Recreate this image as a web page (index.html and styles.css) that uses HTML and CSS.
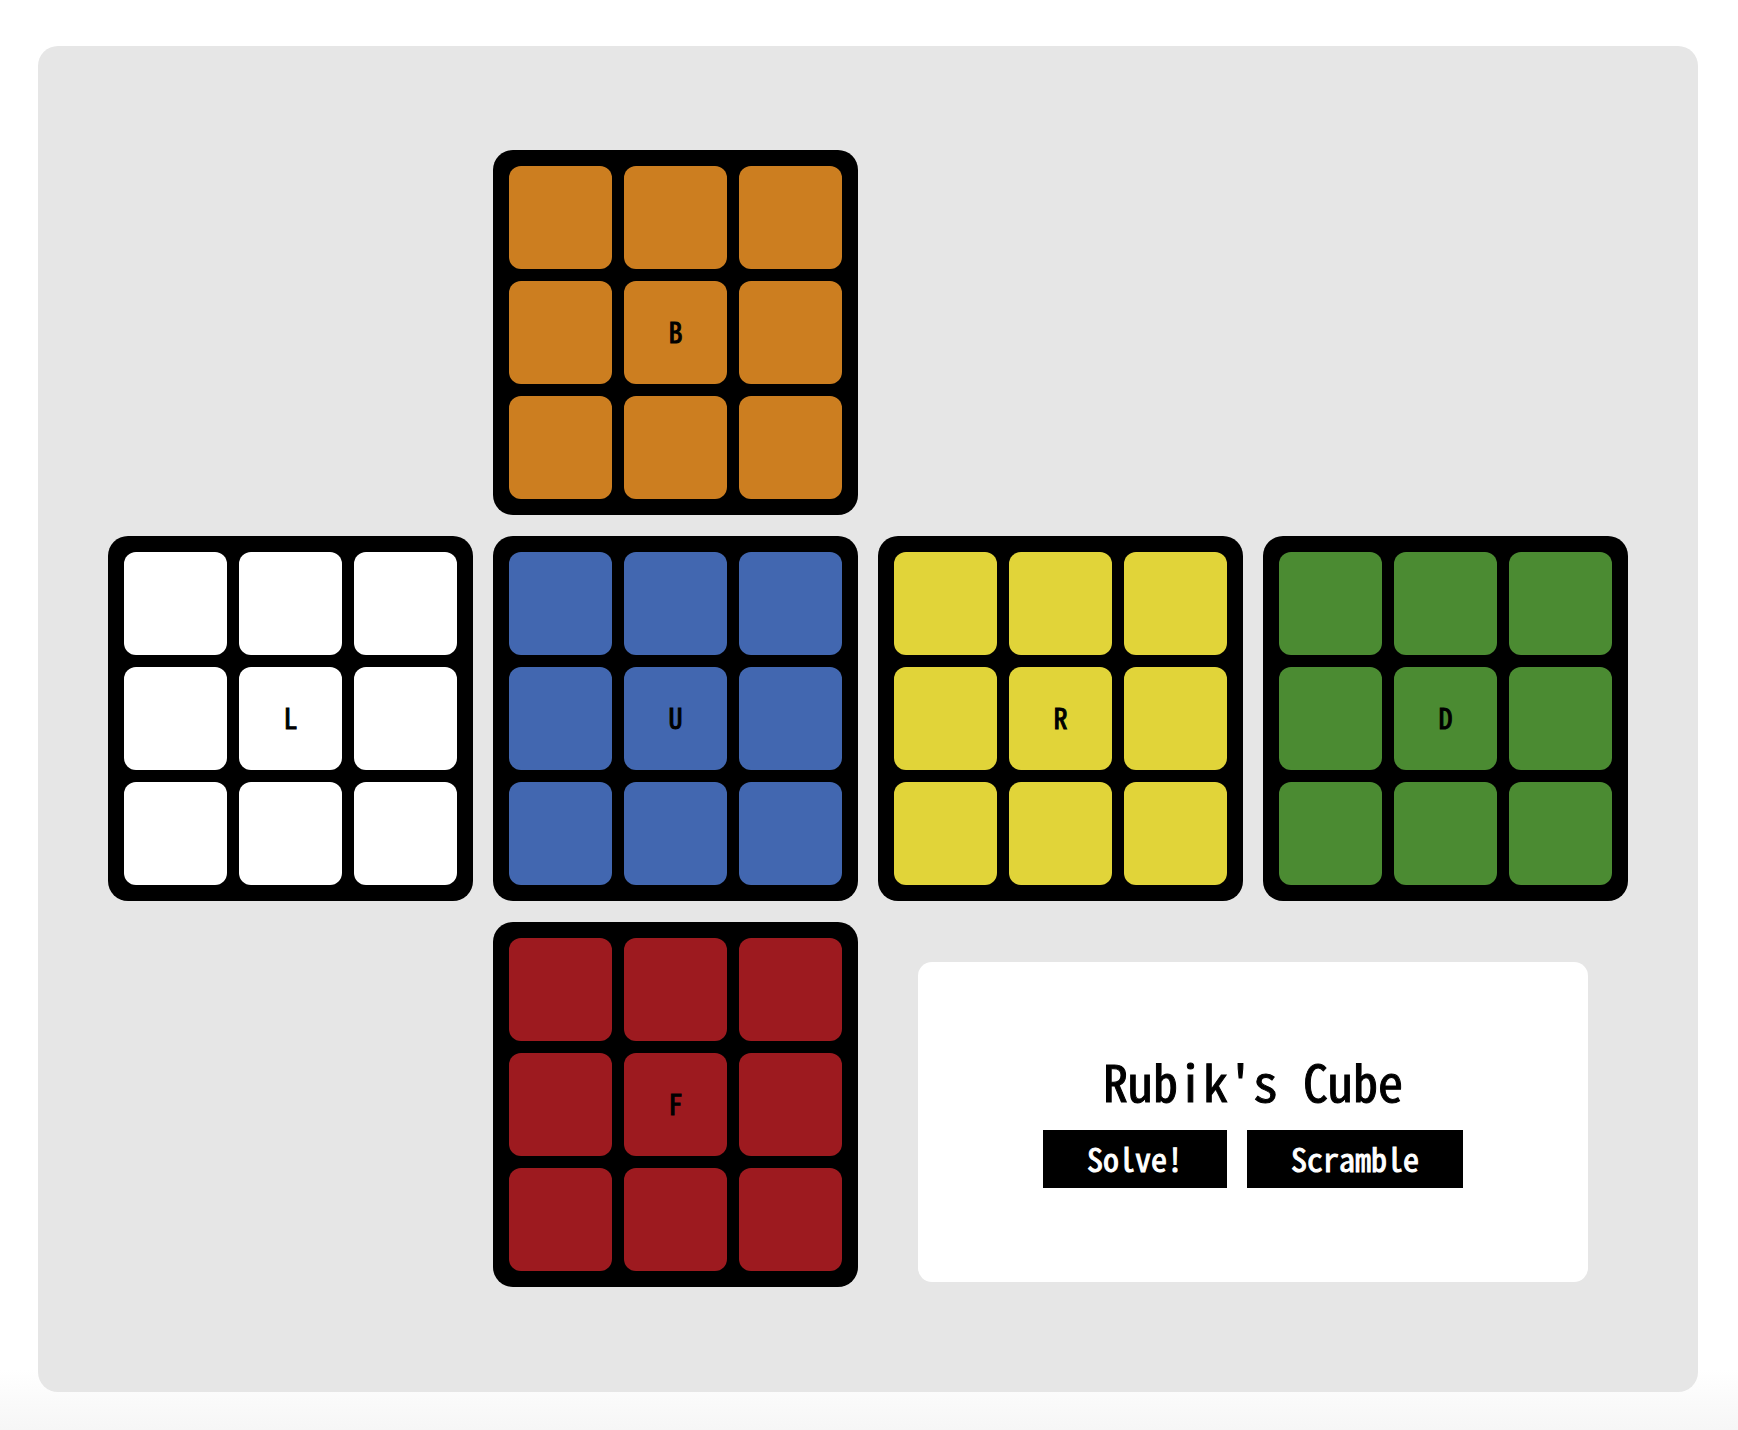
FILE: index.html
```html
<!DOCTYPE html>
<html lang="en">
<head>
<meta charset="utf-8">
<meta name="viewport" content="width=device-width, initial-scale=1">
<title>Rubik's Cube</title>
<link rel="stylesheet" href="styles.css">
</head>
<body>
<main class="board">
  <section class="face face-back" aria-label="Back">
    <div class="tile"></div><div class="tile"></div><div class="tile"></div>
    <div class="tile"></div><div class="tile">B</div><div class="tile"></div>
    <div class="tile"></div><div class="tile"></div><div class="tile"></div>
  </section>
  <section class="face face-left" aria-label="Left">
    <div class="tile"></div><div class="tile"></div><div class="tile"></div>
    <div class="tile"></div><div class="tile">L</div><div class="tile"></div>
    <div class="tile"></div><div class="tile"></div><div class="tile"></div>
  </section>
  <section class="face face-up" aria-label="Up">
    <div class="tile"></div><div class="tile"></div><div class="tile"></div>
    <div class="tile"></div><div class="tile">U</div><div class="tile"></div>
    <div class="tile"></div><div class="tile"></div><div class="tile"></div>
  </section>
  <section class="face face-right" aria-label="Right">
    <div class="tile"></div><div class="tile"></div><div class="tile"></div>
    <div class="tile"></div><div class="tile">R</div><div class="tile"></div>
    <div class="tile"></div><div class="tile"></div><div class="tile"></div>
  </section>
  <section class="face face-down" aria-label="Down">
    <div class="tile"></div><div class="tile"></div><div class="tile"></div>
    <div class="tile"></div><div class="tile">D</div><div class="tile"></div>
    <div class="tile"></div><div class="tile"></div><div class="tile"></div>
  </section>
  <section class="face face-front" aria-label="Front">
    <div class="tile"></div><div class="tile"></div><div class="tile"></div>
    <div class="tile"></div><div class="tile">F</div><div class="tile"></div>
    <div class="tile"></div><div class="tile"></div><div class="tile"></div>
  </section>
  <section class="panel">
    <h1 class="title">Rubik's Cube</h1>
    <div class="actions">
      <button class="action" type="button">Solve!</button>
      <button class="action" type="button">Scramble</button>
    </div>
  </section>
</main>
</body>
</html>
```
FILE: styles.css
```css
*,
*::before,
*::after {
  box-sizing: border-box;
}

body {
  margin: 0;
  min-height: 100vh;
  padding: 46px 40px 38px 38px;
  background: linear-gradient(to top, #f6f6f6, #fff 60px);
  color: #000;
  font-family: "Noto Sans Mono CJK SC", "DejaVu Sans Mono", monospace;
}

/* Unfolded cube: four columns by three rows */
.board {
  display: grid;
  grid-template-columns: repeat(4, 1fr);
  grid-template-areas:
    ".    back  .     ."
    "left up    right down"
    ".    front panel panel";
  gap: 21px 20px;
  padding: 104px 70px 105px;
  border-radius: 20px;
  background: #e6e6e6;
}

.face {
  display: grid;
  grid-template-columns: repeat(3, 1fr);
  grid-template-rows: repeat(3, 1fr);
  gap: 12px;
  aspect-ratio: 1;
  padding: 16px;
  border-radius: 20px;
  background: #000;
}

.face-back { grid-area: back; --sticker: #cc7e20; }
.face-left { grid-area: left; --sticker: #fff; }
.face-up { grid-area: up; --sticker: #4267b0; }
.face-right { grid-area: right; --sticker: #e1d439; }
.face-down { grid-area: down; --sticker: #4b8b32; }
.face-front { grid-area: front; --sticker: #9d1a1f; }

.tile {
  display: flex;
  align-items: center;
  justify-content: center;
  padding-bottom: 4px;
  border-radius: 12px;
  background: var(--sticker);
  font-size: 28px;
  font-weight: 400;
  line-height: 32px;
  -webkit-text-stroke: 1px currentColor;
}

.panel {
  grid-area: panel;
  display: flex;
  flex-direction: column;
  align-items: center;
  justify-content: center;
  gap: 24px;
  margin: 40px 40px 5px;
  padding-bottom: 2px;
  border-radius: 14px;
  background: #fff;
}

.title {
  margin: 0;
  font-size: 50px;
  font-weight: 400;
  line-height: 52px;
  -webkit-text-stroke: 1px currentColor;
}

.actions {
  display: flex;
  gap: 20px;
}

.action {
  padding: 12px 44px 14px;
  border: 0;
  background: #000;
  color: #fff;
  font-family: inherit;
  font-size: 32px;
  font-weight: 400;
  line-height: 32px;
  -webkit-text-stroke: 1px currentColor;
  cursor: pointer;
}
```
